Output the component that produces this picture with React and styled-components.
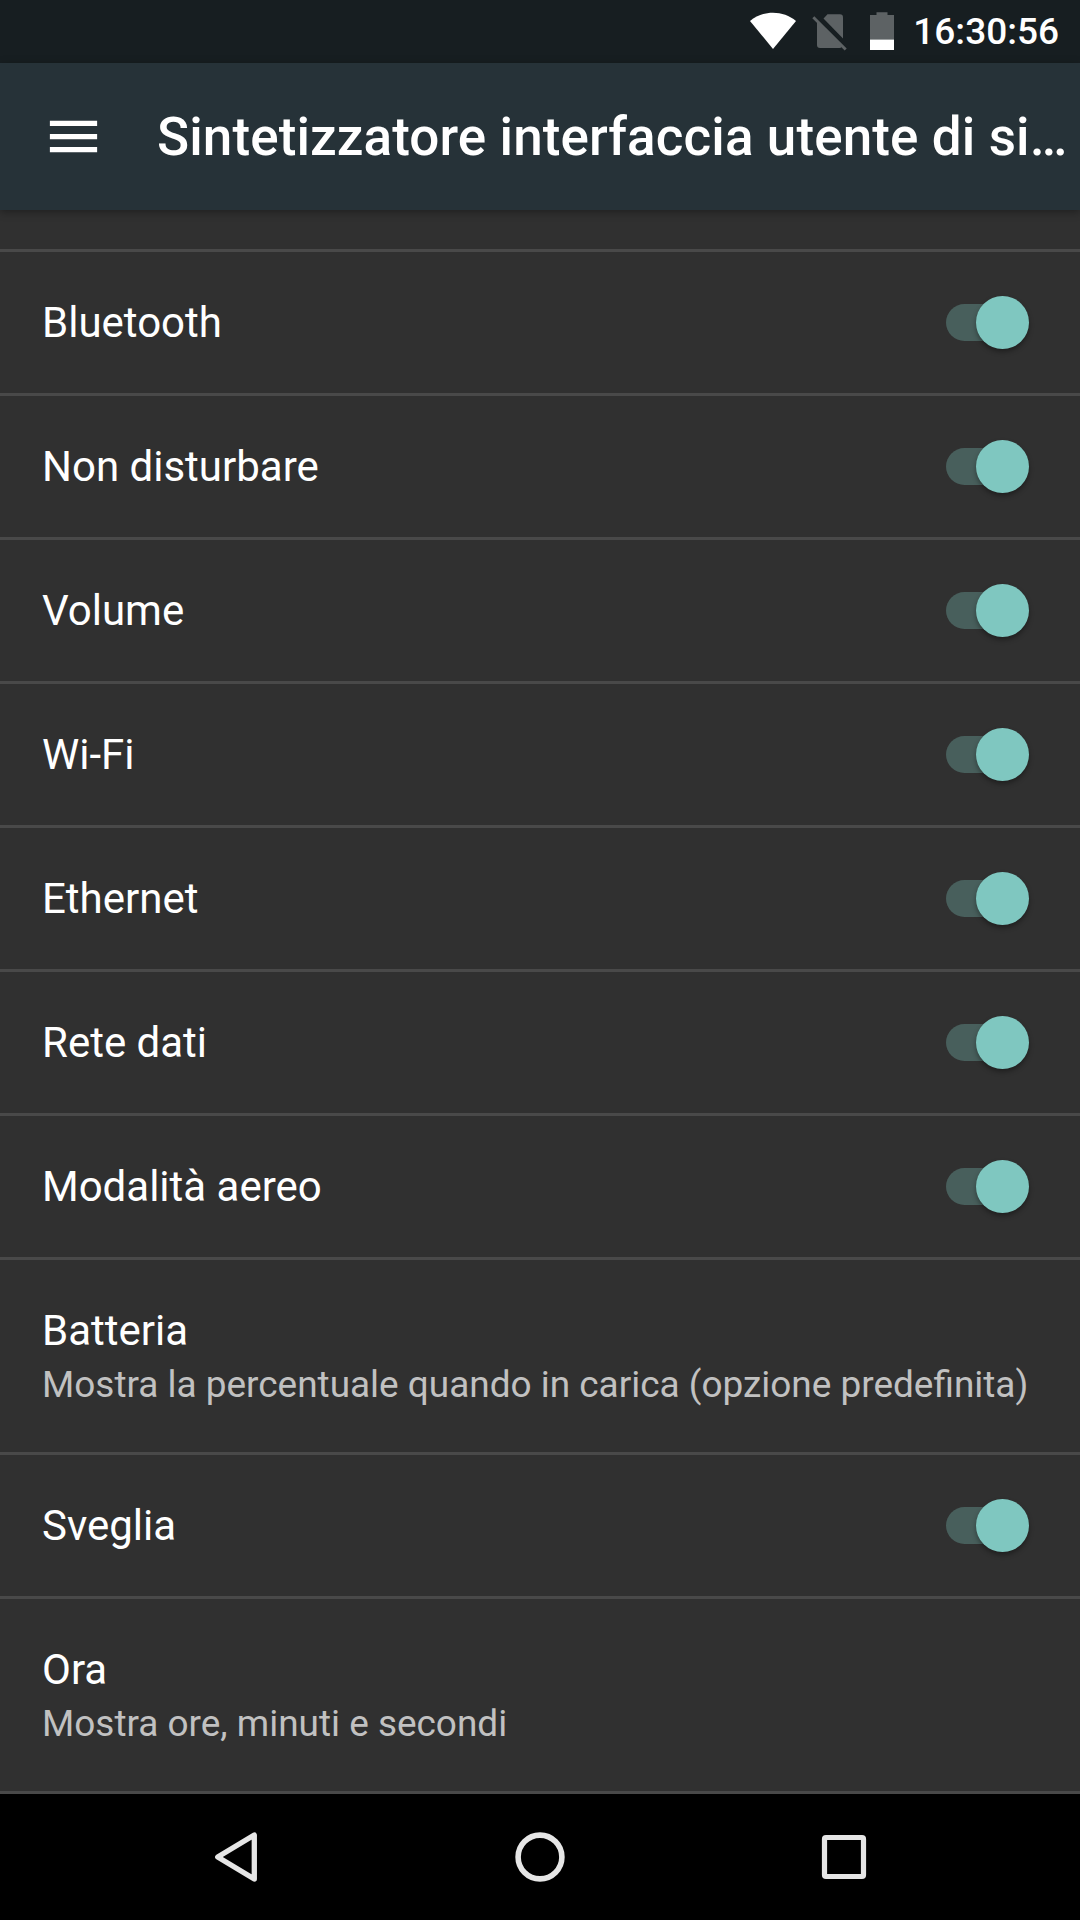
import React, { useReducer } from 'react';
import styled, { createGlobalStyle } from 'styled-components';

const GlobalStyle = createGlobalStyle`
  * {
    box-sizing: border-box;
  }
  body {
    margin: 0;
    background: #303030;
    font-family: Roboto, sans-serif;
    color: #fff;
  }
`;

const ScreenStyle = styled.div`
  display: flex;
  flex-direction: column;
  width: 1080px;
  height: 1920px;
  overflow: hidden;
`;

const StatusBarStyle = styled.header`
  display: flex;
  flex: none;
  align-items: center;
  justify-content: flex-end;
  height: 63px;
  padding-right: 21px;
  background: #171e21;
`;

const ClockStyle = styled.span`
  margin-left: 16px;
  font-size: 37px;
  font-weight: 500;
  line-height: 63px;
`;

const ToolbarStyle = styled.div`
  display: flex;
  flex: none;
  align-items: center;
  height: 147px;
  padding-left: 42px;
  background: #263238;
  box-shadow: 0 2px 8px rgba(0, 0, 0, 0.35);
  z-index: 1;
`;

const MenuButtonStyle = styled.button`
  display: flex;
  margin-right: 52px;
  padding: 0;
  border: 0;
  background: none;
`;

const ToolbarTitleStyle = styled.h1`
  margin: 0;
  font-size: 53px;
  font-weight: 500;
  line-height: 62px;
  letter-spacing: 0.1px;
  white-space: nowrap;
`;

const ListStyle = styled.main`
  flex: 1;
`;

// what is left of the row scrolled under the toolbar
const ScrolledRowStyle = styled.div`
  height: 42px;
  border-bottom: 3px solid #494949;
`;

const RowStyle = styled.div`
  display: flex;
  align-items: center;
  justify-content: space-between;
  height: ${props => props.$tall ? '195px' : '144px'};
  padding: 0 51px 0 42px;
  border-bottom: 3px solid #494949;
`;

const RowTitleStyle = styled.div`
  font-size: 42px;
  line-height: 56px;
`;

const RowSummaryStyle = styled.div`
  margin: 1px 0 -1px;
  font-size: 36.95px;
  line-height: 50px;
  white-space: nowrap;
  color: #c1c1c1;
`;

const SwitchStyle = styled.button`
  display: flex;
  align-items: center;
  justify-content: ${props => props.$on ? 'flex-end' : 'flex-start'};
  width: 75px;
  height: 37px;
  margin-right: 8px;
  padding: 0;
  border: 0;
  border-radius: 19px;
  background: ${props => props.$on ? '#485f5c' : '#5d5d5d'};
`;

const ThumbStyle = styled.span`
  flex: none;
  width: 53px;
  height: 53px;
  margin: 0 -8px;
  border-radius: 50%;
  background: ${props => props.$on ? '#7fc7c0' : '#bdbdbd'};
  box-shadow: 0 3px 5px rgba(0, 0, 0, 0.35);
`;

const NavBarStyle = styled.nav`
  display: grid;
  flex: none;
  grid-template-columns: repeat(3, 304px);
  align-items: center;
  justify-content: center;
  justify-items: center;
  height: 126px;
  background: #000;
`;

function StatusIcons() {
  return <svg width="150" height="63" viewBox="747 0 150 63">
    <path d="M773 49 L750 21 C756.5 15.5 764.5 12.7 773 12.7 C781.5 12.7 789.5 15.5 796 21 Z" fill="#fff" />
    <g fill="#5d6264">
      <path d="M823.5 18.5 L827.5 14.3 H840 Q843 14.3 843 17.3 V38.5 Z" />
      <path d="M817 21.5 L842 46.5 Q841 48 839.5 48 H820 Q817 48 817 45 Z" />
      <path d="M814.3 16.3 L846.7 48.5 L844.7 50.5 L812.3 18.3 Z" />
      <path d="M870 39.5 V15 H876.5 V12.3 H887.5 V15 H894 V39.5 Z" />
    </g>
    <path d="M870 39.5 H894 V50 H870 Z" fill="#fff" />
  </svg>;
}

function MenuIcon() {
  return <svg width="63" height="63" viewBox="0 0 24 24" fill="#fff">
    <path d="M3 18h18v-2H3v2zm0-5h18v-2H3v2zm0-7v2h18V6H3z" />
  </svg>;
}

function NavIcon({ children }) {
  return <svg width="64" height="64" viewBox="0 0 64 64" fill="none" stroke="#e6e6e6" strokeLinejoin="round">
    {children}
  </svg>;
}

const rows = [
  { title: 'Bluetooth', toggle: true },
  { title: 'Non disturbare', toggle: true },
  { title: 'Volume', toggle: true },
  { title: 'Wi-Fi', toggle: true },
  { title: 'Ethernet', toggle: true },
  { title: 'Rete dati', toggle: true },
  { title: 'Modalità aereo', toggle: true },
  { title: 'Batteria', summary: 'Mostra la percentuale quando in carica (opzione predefinita)' },
  { title: 'Sveglia', toggle: true },
  { title: 'Ora', summary: 'Mostra ore, minuti e secondi' },
];

function changeToggle(state, idx) {
  const newState = [...state];
  newState[idx] = !newState[idx];
  return newState;
}

function SettingsList() {
  const [onList, dispatchToggle] = useReducer(changeToggle, Array(rows.length).fill(true));

  return <ListStyle>
    <ScrolledRowStyle />
    {rows.map((row, idx) => (
      <RowStyle key={row.title} $tall={!!row.summary}>
        <div>
          <RowTitleStyle>{row.title}</RowTitleStyle>
          {row.summary ? <RowSummaryStyle>{row.summary}</RowSummaryStyle> : null}
        </div>
        {row.toggle ? <SwitchStyle
          role="switch"
          aria-checked={onList[idx]}
          aria-label={row.title}
          $on={onList[idx]}
          onClick={() => dispatchToggle(idx)}
        >
          <ThumbStyle $on={onList[idx]} />
        </SwitchStyle> : null}
      </RowStyle>
    ))}
  </ListStyle>;
}

export default function App() {
  return <>
    <GlobalStyle />
    <ScreenStyle>
      <StatusBarStyle>
        <StatusIcons />
        <ClockStyle>16:30:56</ClockStyle>
      </StatusBarStyle>
      <ToolbarStyle>
        <MenuButtonStyle aria-label="Menu"><MenuIcon /></MenuButtonStyle>
        <ToolbarTitleStyle>Sintetizzatore interfaccia utente di si…</ToolbarTitleStyle>
      </ToolbarStyle>
      <SettingsList />
      <NavBarStyle>
        <NavIcon><path d="M13.7 32 L50.3 10 V54 Z" strokeWidth="5.3" /></NavIcon>
        <NavIcon><circle cx="32" cy="32" r="21.9" strokeWidth="5.6" /></NavIcon>
        <NavIcon><rect x="12.5" y="12.5" width="39" height="39" rx="1.5" strokeWidth="5.2" /></NavIcon>
      </NavBarStyle>
    </ScreenStyle>
  </>;
}
